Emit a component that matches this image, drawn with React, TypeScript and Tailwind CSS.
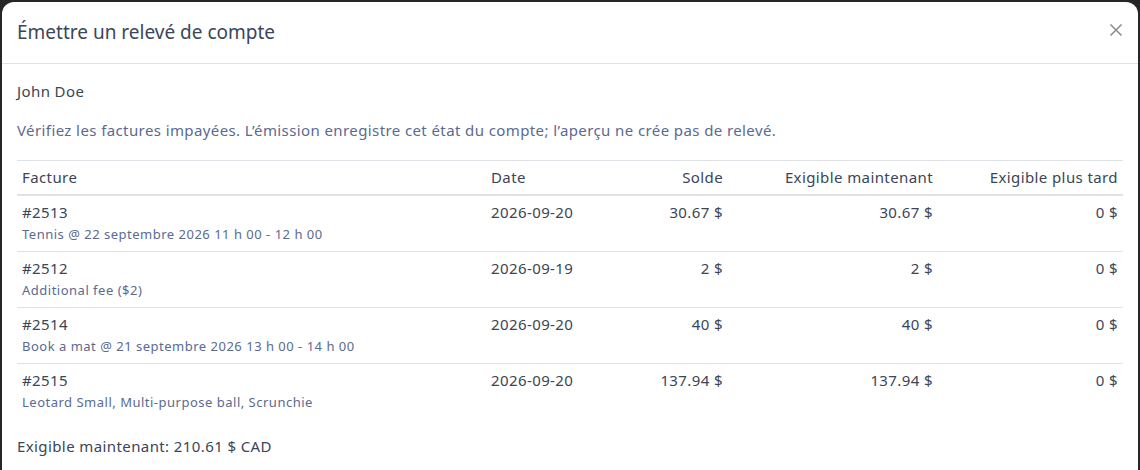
const rows = [
  { id: '#2513', desc: 'Tennis @ 22 septembre 2026 11 h 00 - 12 h 00', date: '2026-09-20', solde: '30.67 $', now: '30.67 $', later: '0 $' },
  { id: '#2512', desc: 'Additional fee ($2)', date: '2026-09-19', solde: '2 $', now: '2 $', later: '0 $' },
  { id: '#2514', desc: 'Book a mat @ 21 septembre 2026 13 h 00 - 14 h 00', date: '2026-09-20', solde: '40 $', now: '40 $', later: '0 $' },
  { id: '#2515', desc: 'Leotard Small, Multi-purpose ball, Scrunchie', date: '2026-09-20', solde: '137.94 $', now: '137.94 $', later: '0 $' },
]

export default function App() {
  return (
    <div
      className="w-[1140px] h-[470px] overflow-hidden bg-[#262626] pt-[2px] px-[2px]"
      style={{ fontFamily: '"Noto Sans", "Open Sans", sans-serif' }}
    >
      <div className="h-full bg-white rounded-t-[12px] text-[#3a4557]">
        <div className="h-[62px] flex items-center justify-between pl-[15px] pr-[15px] border-b border-[#dee2e6]">
          <h2 className="text-[19px] text-[#3b4659]">Émettre un relevé de compte</h2>
          <svg width="14" height="14" viewBox="0 0 14 14" className="mt-[-5px]">
            <path d="M1.5 1.5 L12.5 12.5 M12.5 1.5 L1.5 12.5" stroke="#8a8a8a" strokeWidth="1.5" />
          </svg>
        </div>
        <div className="px-[15px] text-[15px] tracking-[0.4px]">
          <p className="leading-[22px] pt-[16px]">John Doe</p>
          <p className="leading-[22px] pt-[17px] text-[#5a6a92]">
            Vérifiez les factures impayées. L’émission enregistre cet état du compte; l’aperçu ne crée pas de relevé.
          </p>
          <table className="table-fixed w-[1106px] mt-[19px] border-t border-[#dee2e6]">
            <thead>
              <tr className="border-b-2 border-[#dee2e6]">
                <th className="w-[469px] h-[34px] text-left font-normal px-[5px]">Facture</th>
                <th className="w-[114px] text-left font-normal px-[5px]">Date</th>
                <th className="w-[128px] text-right font-normal px-[5px]">Solde</th>
                <th className="w-[210px] text-right font-normal px-[5px]">Exigible maintenant</th>
                <th className="w-[185px] text-right font-normal px-[5px]">Exigible plus tard</th>
              </tr>
            </thead>
            <tbody>
              {rows.map((r, i) => (
                <tr key={r.id} className={i < rows.length - 1 ? 'border-b border-[#dee2e6] align-top' : 'align-top'}>
                  <td className="px-[5px] pt-[5px] pb-[6px]">
                    <div className="leading-[22px]">{r.id}</div>
                    <div className="text-[13px] tracking-[0.5px] leading-[22px] text-[#5a6a92]">{r.desc}</div>
                  </td>
                  <td className="px-[5px] pt-[5px] leading-[22px]">{r.date}</td>
                  <td className="px-[5px] pt-[5px] leading-[22px] text-right">{r.solde}</td>
                  <td className="px-[5px] pt-[5px] leading-[22px] text-right">{r.now}</td>
                  <td className="px-[5px] pt-[5px] leading-[22px] text-right">{r.later}</td>
                </tr>
              ))}
            </tbody>
          </table>
          <p className="leading-[22px] pt-[16px]">Exigible maintenant: 210.61 $ CAD</p>
        </div>
      </div>
    </div>
  )
}
